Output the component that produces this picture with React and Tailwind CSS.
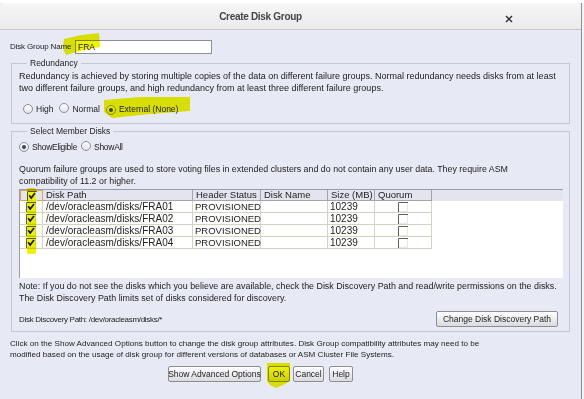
import React from "react";

const Radio = ({ checked }) => (
  <span className="inline-flex w-[10px] h-[10px] rounded-full border border-[#8c8f98] bg-gradient-to-b from-white to-[#e2e4ec] items-center justify-center shrink-0">
    {checked && <span className="w-[4px] h-[4px] rounded-full bg-[#3d4452]" />}
  </span>
);

const Check = ({ checked }) => (
  <svg width="10" height="10" viewBox="0 0 10 10" className="shrink-0">
    <rect x="0" y="0" width="10" height="10" fill="#ffffff" />
    <path d="M0.5 10 V0.5 H10" stroke="#5e5e5e" strokeWidth="1" fill="none" />
    <path d="M9.5 1 V9.5 H1" stroke="#e6e6e6" strokeWidth="1" fill="none" />
    {checked && (
      <path d="M2.2 4.2 L4.2 7 L8 2" stroke="#1a1a1a" strokeWidth="1.7" fill="none" />
    )}
  </svg>
);

const Btn = ({ children, className }) => (
  <div
    className={
      "h-[16px] flex items-center justify-center rounded-[2px] border border-[#8e8e8e] bg-gradient-to-b from-white to-[#dadbe0] text-[8.5px] text-[#222] whitespace-nowrap " +
      className
    }
  >
    {children}
  </div>
);

const rows = ["FRA01", "FRA02", "FRA03", "FRA04"];

export default function App() {
  return (
    <div className="relative w-[584px] h-[399px] overflow-hidden bg-[#e7eaf4] font-['Liberation_Sans',Arial,sans-serif] text-[#222]">
      {/* backdrop strip */}
      <div className="h-[3px] overflow-hidden bg-white">
        <div className="-mt-[8px] flex font-['Liberation_Mono',monospace] text-[9px] leading-[10px] text-[#111] whitespace-pre">
          <span className="ml-[58px]">total</span>
          <span className="ml-[45px]">used</span>
          <span className="ml-[45px]">free</span>
          <span className="ml-[32px]">shared</span>
          <span className="ml-[28px]">buffers</span>
          <span className="ml-[33px]">cached</span>
        </div>
      </div>

      <div className="flex h-[396px]">
        <div className="w-[581px] flex flex-col">
          {/* title bar */}
          <div className="relative h-[27px] shrink-0 flex items-center justify-center bg-gradient-to-b from-[#f6f6f6] to-[#ebebeb] border-b border-[#c6c6c6] rounded-t-[3px]">
            <span className="ml-[-60px] text-[10px] font-bold tracking-[-0.3px] text-[#454545]">
              Create Disk Group
            </span>
            <svg
              width="8"
              height="8"
              viewBox="0 0 8 8"
              className="absolute left-[505px] top-[12px]"
            >
              <path d="M1 1 L7 7 M7 1 L1 7" stroke="#333" strokeWidth="1.5" />
            </svg>
          </div>

          {/* content */}
          <div className="flex flex-col px-[10px] text-[8.5px] leading-[12px]">
            <div className="mt-[10px] h-[14px] flex items-center">
              <span className="w-[65px] shrink-0 whitespace-nowrap text-[8px] tracking-[-0.15px]">Disk Group Name</span>
              <div className="w-[137px] h-[14px] bg-white border border-[#8a8f99] flex items-center pl-[2px] text-[8.5px]">
                FRA
              </div>
            </div>

            {/* Redundancy */}
            <fieldset className="mx-px mt-[3px] border border-[#c4c7d2] px-[7px] pb-[8px]">
              <legend className="ml-[8px] px-[3px] leading-[12px]">Redundancy</legend>
              <div className="mt-px whitespace-nowrap text-[9px]">
                Redundancy is achieved by storing multiple copies of the data on different failure groups. Normal redundancy needs disks from at least
              </div>
              <div className="whitespace-nowrap text-[9px]">
                two different failure groups, and high redundancy from at least three different failure groups.
              </div>
              <div className="mt-[9px] h-[12px] flex items-center pl-[4px]">
                <Radio />
                <span className="ml-[3px]">High</span>
                <span className="ml-[6px]">
                  <Radio />
                </span>
                <span className="ml-[3px]">Normal</span>
                <span className="ml-[6px]">
                  <Radio checked />
                </span>
                <span className="ml-[3px]">External (None)</span>
              </div>
            </fieldset>

            {/* Select Member Disks */}
            <fieldset className="mx-px mt-px border border-[#c4c7d2] pl-[7px] pr-[6px] pb-[4px]">
              <legend className="ml-[8px] px-[3px] leading-[12px]">Select Member Disks</legend>
              <div className="mt-[4px] h-[12px] flex items-center">
                <Radio checked />
                <span className="ml-[3px] tracking-[-0.3px]">ShowEligible</span>
                <span className="ml-[4px]">
                  <Radio />
                </span>
                <span className="ml-[3px] tracking-[-0.3px]">ShowAll</span>
              </div>
              <div className="mt-[10px] whitespace-nowrap text-[8.85px]">
                Quorum failure groups are used to store voting files in extended clusters and do not contain any user data. They require ASM
              </div>
              <div className="whitespace-nowrap text-[8.85px]">compatibility of 11.2 or higher.</div>

              {/* table */}
              <div className="mt-[2px] w-[544px] h-[89px] bg-white border-l border-t border-[#9a9ca6] flex flex-col">
                <div className="h-[11px] flex bg-[#e3e5ee] text-[9.5px] leading-[10px] text-[#222]">
                  <div className="w-[23px] h-[11px] border border-[#e2a452] flex items-center justify-center">
                    <Check checked />
                  </div>
                  <div className="w-[150px] border-r border-b border-[#a3a5ad] pl-[3px]">Disk Path</div>
                  <div className="w-[68px] border-r border-b border-[#a3a5ad] pl-[3px]">Header Status</div>
                  <div className="w-[67px] border-r border-b border-[#a3a5ad] pl-[3px]">Disk Name</div>
                  <div className="w-[47px] border-r border-b border-[#a3a5ad] pl-[3px]">Size (MB)</div>
                  <div className="w-[57px] border-r border-b border-[#a3a5ad] pl-[3px]">Quorum</div>
                  <div className="flex-1" />
                </div>
                {rows.map((r) => (
                  <div key={r} className="h-[12px] flex text-[10px] leading-[11px] text-[#222]">
                    <div className="w-[23px] border-r border-b border-[#d3d3c4] flex items-center justify-center">
                      <Check checked />
                    </div>
                    <div className="w-[150px] border-r border-b border-[#d3d3c4] pl-[3px]">
                      /dev/oracleasm/disks/{r}
                    </div>
                    <div className="w-[68px] border-r border-b border-[#d3d3c4] pl-[2px] text-[9.5px]">
                      PROVISIONED
                    </div>
                    <div className="w-[67px] border-r border-b border-[#d3d3c4]" />
                    <div className="w-[47px] border-r border-b border-[#d3d3c4] pl-[2px]">10239</div>
                    <div className="w-[57px] border-r border-b border-[#d3d3c4] flex items-center justify-center">
                      <Check />
                    </div>
                  </div>
                ))}
              </div>

              <div className="mt-[2px] whitespace-nowrap text-[8.9px]">
                Note: If you do not see the disks which you believe are available, check the Disk Discovery Path and read/write permissions on the disks.
              </div>
              <div className="whitespace-nowrap text-[8.9px]">
                The Disk Discovery Path limits set of disks considered for discovery.
              </div>
              <div className="mt-[7px] h-[16px] flex items-center justify-between">
                <span className="mt-[2px] text-[8px] tracking-[-0.3px]">Disk Discovery Path: /dev/oracleasm/disks/*</span>
                <Btn className="w-[122px] mr-[5px]">Change Disk Discovery Path</Btn>
              </div>
            </fieldset>

            <div className="mt-[6px] leading-[11px] whitespace-nowrap text-[8.1px]">
              Click on the Show Advanced Options button to change the disk group attributes. Disk Group compatibility attributes may need to be
            </div>
            <div className="leading-[11px] whitespace-nowrap text-[8.1px]">
              modified based on the usage of disk group for different versions of databases or ASM Cluster File Systems.
            </div>

            <div className="mt-[6px] flex items-center pl-[158px]">
              <Btn className="w-[93px]">Show Advanced Options</Btn>
              <Btn className="w-[22px] ml-[7px]">OK</Btn>
              <Btn className="w-[31px] ml-[3px]">Cancel</Btn>
              <Btn className="w-[24px] ml-[5px]">Help</Btn>
            </div>
          </div>
        </div>
        <div className="flex-1 bg-[#f4f4f6] border-l border-[#8d8f96]" />
      </div>

      {/* marker highlights */}
      <svg
        width="584"
        height="399"
        className="absolute left-0 top-0 pointer-events-none mix-blend-multiply"
      >
        <g fill="#eef200">
          <polygon points="64,39 82,35 99,33 100,47 84,50 66,55 63,48" />
          <polygon points="104,100 140,97 190,97 190,111 150,114 112,118 104,112" />
          <rect x="27" y="188" width="9" height="66" rx="2" />
          <polygon points="267,363 290,363 290,381 283,385 276,388 270,385 267,381" />
        </g>
      </svg>
    </div>
  );
}
